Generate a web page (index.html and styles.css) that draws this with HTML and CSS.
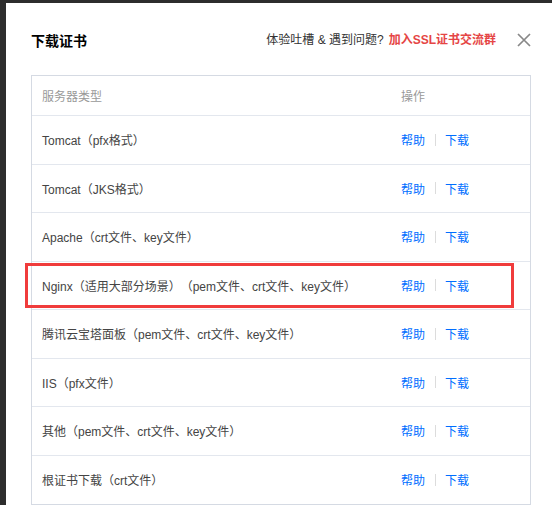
FILE: index.html
```html
<!DOCTYPE html>
<html lang="zh-CN">
<head>
<meta charset="utf-8">
<title>下载证书</title>
<link rel="stylesheet" href="styles.css">
</head>
<body>
<div class="modal">
  <div class="modal-head">
    <div class="title">下载证书</div>
    <div class="head-right">
      <span class="feedback">体验吐槽 &amp; 遇到问题?</span>
      <a class="group" href="#">加入SSL证书交流群</a>
      <span class="close" aria-label="关闭">
        <svg width="14" height="14" viewBox="0 0 14 14"><path d="M1 1L13 13M13 1L1 13" stroke="#888" stroke-width="1.7" fill="none"/></svg>
      </span>
    </div>
  </div>
  <div class="table">
    <div class="row head">
      <div class="cell">服务器类型</div>
      <div class="cell">操作</div>
    </div>
    <div class="row">
      <div class="cell">Tomcat（pfx格式）</div>
      <div class="cell ops"><a href="#">帮助</a><i class="sep"></i><a href="#">下载</a></div>
    </div>
    <div class="row">
      <div class="cell">Tomcat（JKS格式）</div>
      <div class="cell ops"><a href="#">帮助</a><i class="sep"></i><a href="#">下载</a></div>
    </div>
    <div class="row">
      <div class="cell">Apache（crt文件、key文件）</div>
      <div class="cell ops"><a href="#">帮助</a><i class="sep"></i><a href="#">下载</a></div>
    </div>
    <div class="row marked">
      <div class="cell">Nginx（适用大部分场景）（pem文件、crt文件、key文件）</div>
      <div class="cell ops"><a href="#">帮助</a><i class="sep"></i><a href="#">下载</a></div>
      <span class="highlight"></span>
    </div>
    <div class="row">
      <div class="cell">腾讯云宝塔面板（pem文件、crt文件、key文件）</div>
      <div class="cell ops"><a href="#">帮助</a><i class="sep"></i><a href="#">下载</a></div>
    </div>
    <div class="row">
      <div class="cell">IIS（pfx文件）</div>
      <div class="cell ops"><a href="#">帮助</a><i class="sep"></i><a href="#">下载</a></div>
    </div>
    <div class="row">
      <div class="cell">其他（pem文件、crt文件、key文件）</div>
      <div class="cell ops"><a href="#">帮助</a><i class="sep"></i><a href="#">下载</a></div>
    </div>
    <div class="row">
      <div class="cell">根证书下载（crt文件）</div>
      <div class="cell ops"><a href="#">帮助</a><i class="sep"></i><a href="#">下载</a></div>
    </div>
  </div>
</div>
</body>
</html>
```
FILE: styles.css
```css
html, body {
  margin: 0;
  padding: 0;
}
body {
  background: #2d2d2d;
  overflow: hidden;
  height: 505px;
  font-family: "Liberation Sans", "Noto Sans CJK SC", sans-serif;
  font-size: 12px;
  color: #444;
  text-spacing-trim: space-all;
}
.modal {
  margin: 3px 0 0 6px;
  width: 550px;
  box-sizing: border-box;
  padding: 0 25px 20px;
  background: #fff;
  min-height: 520px;
}
.modal-head {
  display: flex;
  align-items: center;
  height: 20px;
  padding-top: 27px;
  margin-bottom: 25px;
}
.title {
  font-family: "Noto Sans CJK SC", sans-serif;
  font-size: 14px;
  font-weight: 700;
  color: #000;
  line-height: 20px;
}
.head-right {
  margin-left: auto;
  display: flex;
  align-items: center;
}
.feedback {
  color: #333;
  line-height: 20px;
}
.group {
  margin-left: 5px;
  color: #e54545;
  font-weight: 700;
  text-decoration: none;
  line-height: 20px;
}
.close {
  margin-left: 21px;
  width: 14px;
  height: 14px;
  display: flex;
}
.table {
  border: 1px solid #d5dae3;
}
.row {
  display: grid;
  grid-template-columns: 359px 1fr;
  align-items: center;
  height: 48.5px;
  box-sizing: border-box;
  border-bottom: 1px solid #e3e7ee;
  position: relative;
}
.row:last-child {
  border-bottom: none;
}
.row.head {
  height: 40px;
  color: #999;
}
.cell {
  padding-left: 10px;
  white-space: nowrap;
}
.ops {
  display: flex;
  align-items: center;
}
.ops a {
  color: #006eff;
  text-decoration: none;
}
.sep {
  display: inline-block;
  width: 1px;
  height: 12px;
  background: #dcdcdc;
  margin: 0 9px 0 10px;
}
.highlight {
  position: absolute;
  left: -7px;
  top: 1px;
  width: 489px;
  height: 45px;
  box-sizing: border-box;
  border: 3px solid #f03c3c;
  pointer-events: none;
}
```
